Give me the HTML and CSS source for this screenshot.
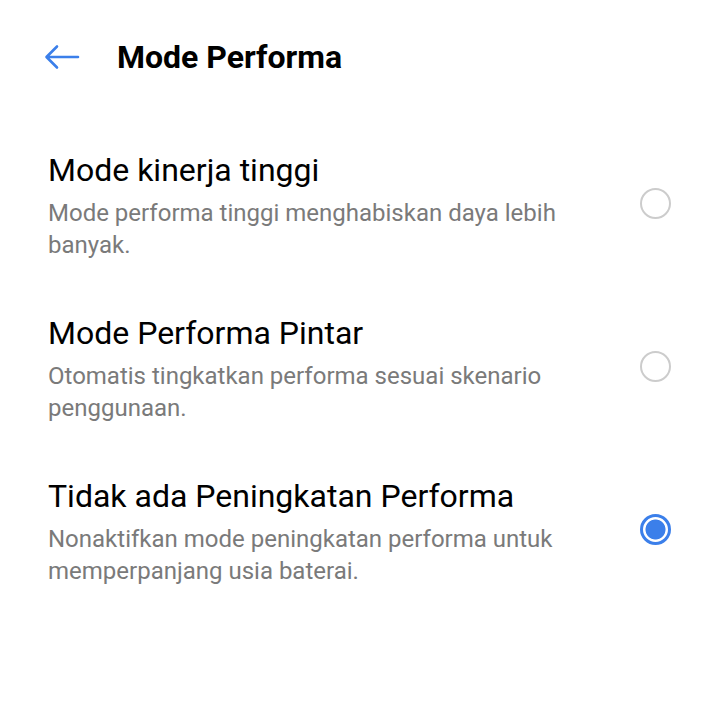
FILE: index.html
```html
<!DOCTYPE html>
<html lang="id">
<head>
<meta charset="utf-8">
<link rel="stylesheet" href="styles.css">
</head>
<body>
<div class="screen">
  <header class="header">
    <svg class="back" width="36" height="26" viewBox="0 0 36 26" aria-hidden="true">
      <path d="M34 13H3M13 2.5L2.5 13L13 23.5" fill="none" stroke="#3b7fea" stroke-width="2.6" stroke-linecap="round" stroke-linejoin="round"/>
    </svg>
    <h1 class="title">Mode Performa</h1>
  </header>
  <div class="list">
    <div class="item">
      <div class="text">
        <div class="item-title">Mode kinerja tinggi</div>
        <div class="item-desc">Mode performa tinggi menghabiskan daya lebih banyak.</div>
      </div>
      <span class="radio"></span>
    </div>
    <div class="item">
      <div class="text">
        <div class="item-title">Mode Performa Pintar</div>
        <div class="item-desc">Otomatis tingkatkan performa sesuai skenario penggunaan.</div>
      </div>
      <span class="radio"></span>
    </div>
    <div class="item">
      <div class="text">
        <div class="item-title">Tidak ada Peningkatan Performa</div>
        <div class="item-desc">Nonaktifkan mode peningkatan performa untuk memperpanjang usia baterai.</div>
      </div>
      <span class="radio checked"></span>
    </div>
  </div>
</div>
</body>
</html>
```
FILE: styles.css
```css
html, body {
  margin: 0;
  padding: 0;
  background: #ffffff;
}
body {
  font-family: Roboto, "Noto Sans", sans-serif;
  color: #000;
}
.screen {
  width: 720px;
  height: 720px;
}
.header {
  height: 114px;
  display: flex;
  align-items: center;
  padding-left: 44px;
  box-sizing: border-box;
}
.back {
  display: block;
  flex: none;
}
.title {
  margin: 0 0 0 37px;
  font-size: 32px;
  font-weight: 700;
  line-height: 40px;
  color: #000;
}
.list {
  padding: 36px 49px 0 48px;
  display: flex;
  flex-direction: column;
  gap: 52px;
}
.item {
  display: flex;
  align-items: center;
  justify-content: space-between;
}
.text {
  width: 570px;
}
.item-title {
  font-size: 32px;
  line-height: 40px;
  color: #000;
}
.item-desc {
  margin-top: 7px;
  font-size: 24px;
  line-height: 32px;
  color: #7a7a7a;
}
.radio {
  width: 27px;
  height: 27px;
  margin-bottom: 4px;
  border: 2px solid #cccccc;
  border-radius: 50%;
  box-sizing: content-box;
  flex: none;
}
.radio.checked {
  width: 25px;
  height: 25px;
  border: 3px solid #3b7fea;
  background: radial-gradient(circle, #3b7fea 0 9.6px, #fff 10.4px);
}
```
